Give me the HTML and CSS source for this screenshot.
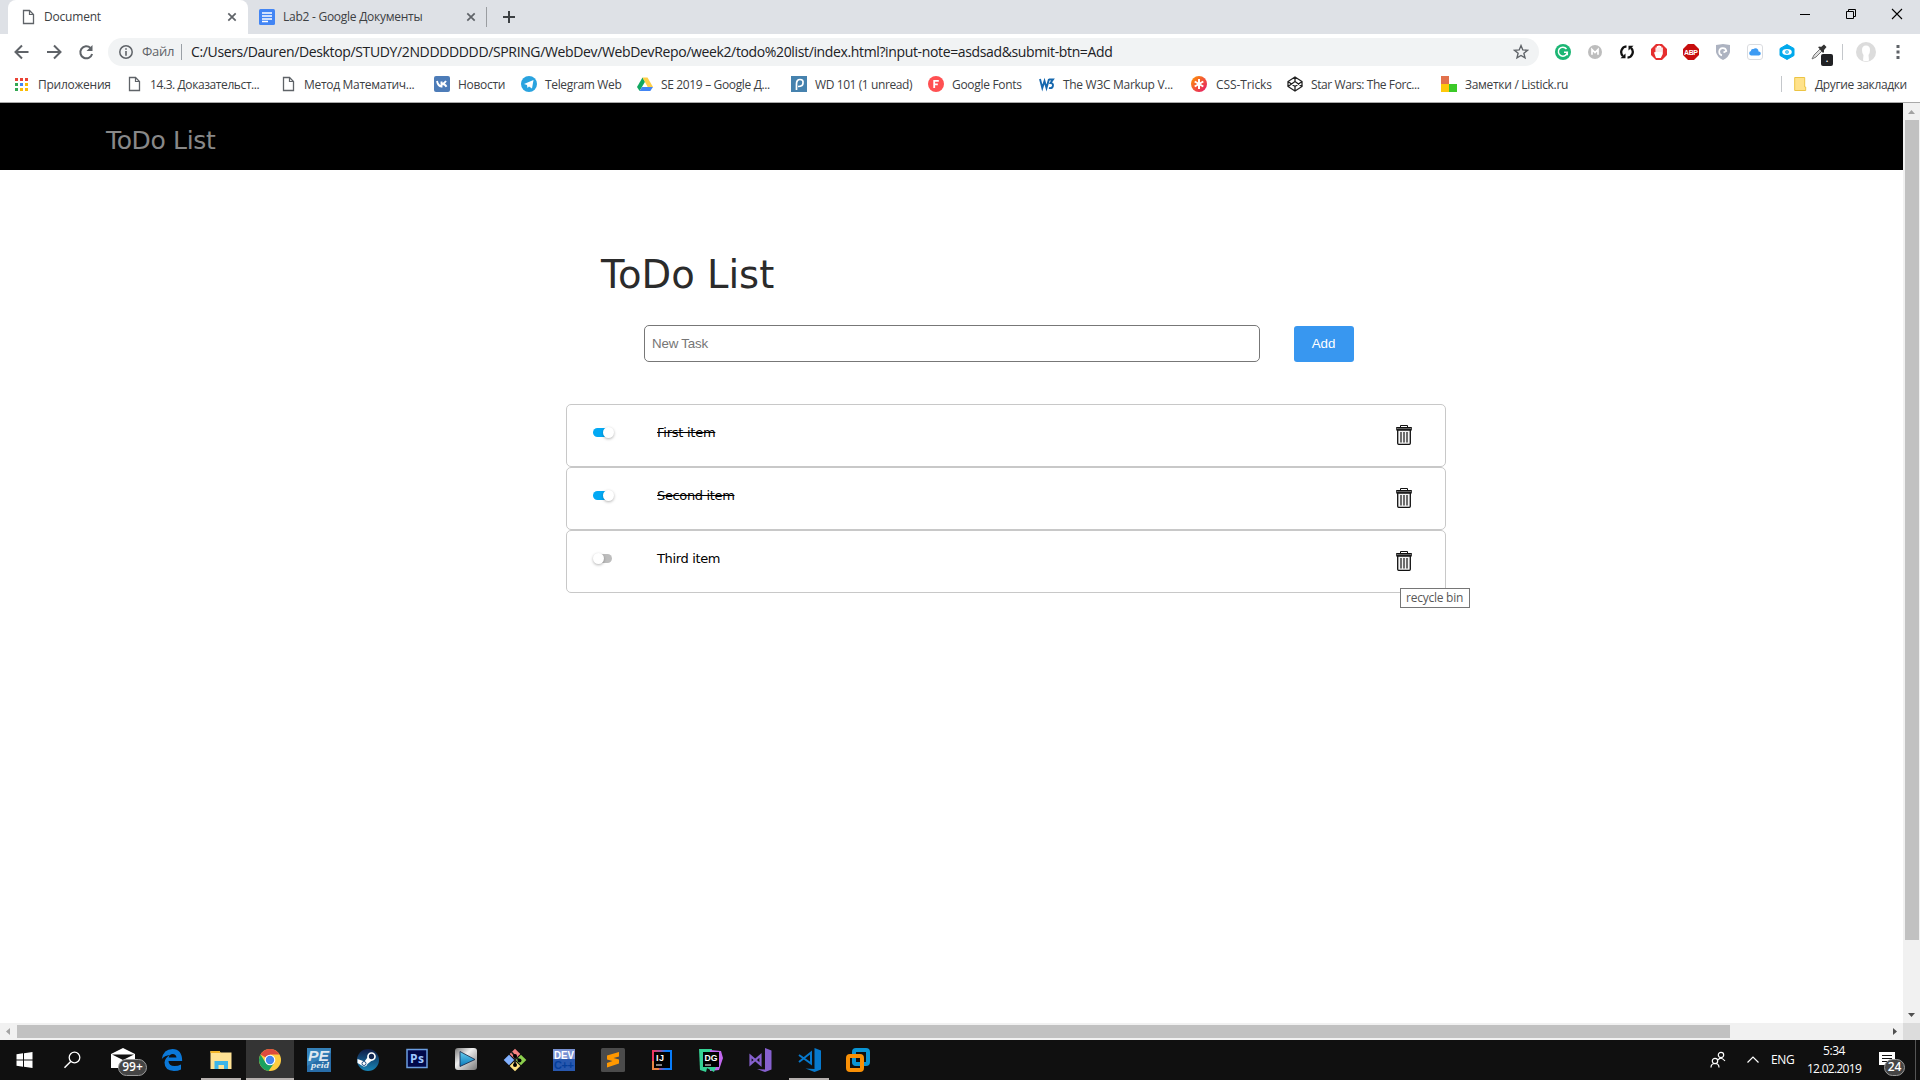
FILE: index.html
```html
<!DOCTYPE html>
<html lang="ru">
<head>
<meta charset="utf-8">
<title>Document</title>
<link rel="stylesheet" href="styles.css">
</head>
<body>
<svg class="defs" width="0" height="0">
  <symbol id="doc" viewBox="0 0 16 16"><path d="M3.500 1.500h6l4 4v9h-10z" fill="#fff" stroke="#5f6368" stroke-width="1.300"/><path d="M9.500 1.500v4h4" fill="none" stroke="#5f6368" stroke-width="1.200"/></symbol>
  <symbol id="close" viewBox="0 0 10 10"><path d="M1.300 1.300l7.400 7.400M8.700 1.300l-7.400 7.400" stroke="#5f6368" stroke-width="1.700"/></symbol>
  <symbol id="bin" viewBox="0 0 16 20"><path d="M4.500 2.500v-2h7v2" fill="none" stroke="#111"/><path d="M.8 2.700h14.400v2.200H.8z" fill="#eee" stroke="#111" stroke-width="1.200"/><path d="M2 2.800h12" stroke="#111" stroke-width="1.400"/><path d="M1.700 5h12.600v13.300q0 1-1 1H2.700q-1 0-1-1z" fill="#f4f4f4" stroke="#111" stroke-width="1.300"/><path d="M5 7v10.500M8 7v10.500M11 7v10.500" stroke="#555" stroke-width="1.700"/></symbol>
</svg>

<header class="browser">
  <div class="tabs">
    <div class="tab active">
      <svg width="16" height="16"><use href="#doc"/></svg>
      <span class="tab-name t-doc">Document</span>
      <svg width="10" height="10"><use href="#close"/></svg>
    </div>
    <div class="tab idle">
      <svg width="16" height="16" viewBox="0 0 16 16"><rect width="16" height="16" rx="1.500" fill="#4285f4"/><path d="M3 4h10M3 7h10M3 10h10M3 12.600h6" stroke="#fff" stroke-width="1.500"/></svg>
      <span class="tab-name t-lab">Lab2 - Google Документы</span>
      <svg width="10" height="10"><use href="#close"/></svg>
    </div>
    <svg class="plus" width="12" height="12" viewBox="0 0 12 12"><path d="M6 0v12M0 6h12" stroke="#3c4043" stroke-width="2"/></svg>
    <div class="window-controls">
      <svg width="46" height="28" viewBox="0 0 46 28"><path d="M18 14.500h10" stroke="#000"/></svg>
      <svg width="46" height="28" viewBox="0 0 46 28"><path d="M18.500 11.500h7v7h-7zM20.500 11v-1.500h7v7H26" fill="none" stroke="#000"/></svg>
      <svg width="46" height="28" viewBox="0 0 46 28"><path d="M18 9l10 10M28 9L18 19" stroke="#000" stroke-width="1.100"/></svg>
    </div>
  </div>

  <div class="toolbar">
    <div class="nav">
      <svg width="32" height="28" viewBox="0 0 32 28"><path d="M16 7.500L9.500 14l6.500 6.500M9.500 14H22.500" fill="none" stroke="#5f6368" stroke-width="2"/></svg>
      <svg width="32" height="28" viewBox="0 0 32 28"><path d="M16 7.500l6.500 6.500-6.500 6.500M22.500 14H9" fill="none" stroke="#5f6368" stroke-width="2"/></svg>
      <svg width="32" height="28" viewBox="0 0 32 28"><path d="M20.500 10a6 6 0 1 0 1.600 6" fill="none" stroke="#5f6368" stroke-width="2"/><path d="M22.500 7v6h-6z" fill="#5f6368"/></svg>
    </div>
    <div class="omnibox">
      <svg width="14" height="14" viewBox="0 0 14 14"><circle cx="7" cy="7" r="6.200" fill="none" stroke="#5f6368" stroke-width="1.500"/><path d="M7 3.200v1.600M7 6v4.700" stroke="#5f6368" stroke-width="1.600"/></svg>
      <span class="scheme">Файл</span>
      <span class="url">C:/Users/Dauren/Desktop/STUDY/2NDDDDDDD/SPRING/WebDev/WebDevRepo/week2/todo%20list/index.html?input-note=asdsad&amp;submit-btn=Add</span>
      <svg class="star" width="16" height="16" viewBox="0 0 16 16"><path d="M8 1.600l1.800 4.300 4.700.4-3.600 3 1.100 4.600L8 11.500l-4 2.400 1.100-4.600-3.600-3 4.700-.4z" fill="none" stroke="#5f6368" stroke-width="1.400"/></svg>
    </div>
    <div class="extensions">
      <svg viewBox="0 0 16 16"><circle cx="8" cy="8" r="8" fill="#1cb674"/><path d="M11.500 5a4.500 4.500 0 1 0 .8 3.300H9M12.300 8.300v3" fill="none" stroke="#fff" stroke-width="1.500"/></svg>
      <svg viewBox="0 0 16 16"><circle cx="8" cy="8" r="7" fill="#bdbdbd"/><path d="M5 10.800V5.500l3 3 3-3v5.300" fill="none" stroke="#fff" stroke-width="1.700"/></svg>
      <svg viewBox="0 0 16 16"><path d="M7.500 2.300A5.700 5.700 0 0 0 4 12.100M8.500 13.700A5.700 5.700 0 0 0 12 3.900" fill="none" stroke="#111" stroke-width="2.300"/><path d="M1.500 14.200h5V9.500zM14.500 1.800h-5v4.700z" fill="#111"/></svg>
      <svg viewBox="0 0 16 16"><path d="M5 0h6l5 5v6l-5 5H5l-5-5V5z" fill="#e62e2e"/><path d="M5 14L3 8.500l1.500-.5V3.500h1.300V2h1.500V1.500h1.500V2h1.500v1.500h1.500V10l-2 4z" fill="#fff"/><path d="M6 4v4M8 3v5M10 4v4" stroke="#e9a2a2" stroke-width=".5"/></svg>
      <svg viewBox="0 0 16 16"><path d="M5 0h6l5 5v6l-5 5H5l-5-5V5z" fill="#c70d0d"/><text x="8" y="10.700" class="abp" textLength="14" text-anchor="middle">ABP</text></svg>
      <svg viewBox="0 0 16 16"><path d="M1 1l7-1 7 1v7q-1 5-7 8-6-3-7-8z" fill="#adb3c1"/><path d="M7 11.300a3.600 3.600 0 1 1 4.300-4.300L8.500 8.500" fill="none" stroke="#fff" stroke-width="1.700"/></svg>
      <svg viewBox="0 0 16 16"><rect x=".5" y=".5" width="15" height="15" rx="2.500" fill="#fff" stroke="#dadce0"/><path d="M4 11.500a2.300 2.300 0 0 1 0-4.500 2 2 0 0 1 2.500-2 3 3 0 0 1 5 2.500 2 2 0 0 1 .5 4z" fill="#3d9bf3"/></svg>
      <svg viewBox="0 0 16 16"><path d="M8 .5l7 4v7l-7 4-7-4v-7z" fill="#00a9ec" stroke="#00a9ec" stroke-linejoin="round"/><ellipse cx="8" cy="8" rx="4.800" ry="3" fill="#fff"/><circle cx="8" cy="8" r="1.800" fill="#00a9ec"/><circle cx="8" cy="8" r=".7" fill="#fff"/></svg>
      <span class="picker"><svg viewBox="0 0 16 16"><path d="M1 15l2-4 6-6 2 2-6 6z" fill="#ddd" stroke="#777"/><path d="M7 3l2-.5 1 .5L13 .5 15.500 3 13 6v2l-1 1z" fill="#333"/></svg><b>.</b></span>
    </div>
    <i class="bar-sep"></i>
    <svg class="avatar" width="20" height="20" viewBox="0 0 20 20"><circle cx="10" cy="10" r="10" fill="#dcdcdc"/><path d="M6 8q0-4.500 4-4.500T14 8q0 3.500-1.500 5l.5 5.500q-3 1.500-6 0l.5-5.500Q6 11.500 6 8z" fill="#fff"/></svg>
    <svg class="menu" width="4" height="14" viewBox="0 0 4 14"><path d="M.5 0h3v3h-3zM.5 5.500h3v3h-3zM.5 11h3v3h-3z" fill="#5f6368"/></svg>
  </div>

  <nav class="bookmarks">
    <a><svg viewBox="0 0 16 16"><path d="M1 2h3v3H1zM6 2h3v3H6zM11 2h3v3h-3z" fill="#ea4335"/><path d="M1 7h3v3H1zM1 12h3v3H1z" fill="#34a853"/><path d="M6 7h3v3H6z" fill="#4285f4"/><path d="M11 7h3v3h-3zM6 12h3v3H6zM11 12h3v3h-3z" fill="#fbbc05"/></svg><span class="m1">Приложения</span></a>
    <a><svg><use href="#doc"/></svg><span class="m2">14.3. Доказательст...</span></a>
    <a><svg><use href="#doc"/></svg><span class="m3">Метод Математич...</span></a>
    <a><svg viewBox="0 0 16 16"><rect width="16" height="16" rx="2" fill="#4d7cb8"/><path d="M3 5q1 5 4.500 5.500v-5M8 8q2.500-.5 4-3M8 8q3 0 4.500 2.800" fill="none" stroke="#fff" stroke-width="1.900"/></svg><span class="m4">Новости</span></a>
    <a><svg viewBox="0 0 16 16"><circle cx="8" cy="8" r="8" fill="#2aa3df"/><path d="M3 8l9.500-4L11 12.500l-3-2-1.500 1.500-.5-3z" fill="#fff"/></svg><span class="m5">Telegram Web</span></a>
    <a><svg viewBox="0 0 16 16"><path d="M5.500 1.500L0 11l2.600 4L8 5.700z" fill="#11a861"/><path d="M5.500 1.500h5L16 11h-5.300z" fill="#ffcf48"/><path d="M5 11h11l-2.700 4H2.600z" fill="#4285f4"/></svg><span class="m6">SE 2019 – Google Д...</span></a>
    <a><svg viewBox="0 0 16 16"><path d="M0 0h16v16H0z" fill="#4682ae"/><path d="M5.500 14V8q0-4.500 3.500-4.500T12 7q0 3.500-5 3.500" fill="none" stroke="#fff" stroke-width="1.700"/></svg><span class="m7">WD 101 (1 unread)</span></a>
    <a><svg viewBox="0 0 16 16"><circle cx="8" cy="8" r="8" fill="#ff5052"/><path d="M6.200 12V4.800h4.600M6.200 8.300h3.600" fill="none" stroke="#fff" stroke-width="1.800"/></svg><span class="m8">Google Fonts</span></a>
    <a><svg viewBox="0 0 16 16"><path d="M1 3l2.300 9L5.500 5l2 7 2.500-9M10 3.500h4L11.500 7q3 .3 2.400 3T10 12" fill="none" stroke="#1768ae" stroke-width="1.900"/></svg><span class="m9">The W3C Markup V...</span></a>
    <a><svg viewBox="0 0 16 16"><defs><linearGradient id="ct" x2="1" y2="1"><stop stop-color="#ff9800"/><stop offset="1" stop-color="#e4136e"/></linearGradient></defs><circle cx="8" cy="8" r="8" fill="url(#ct)"/><path d="M8 3v10M3.700 5.500l8.600 5M3.700 10.500l8.600-5" stroke="#fff" stroke-width="2"/></svg><span class="m10">CSS-Tricks</span></a>
    <a><svg viewBox="0 0 16 16"><path d="M8 1l7 4.500v5L8 15l-7-4.500v-5zM1 5.500l7 5 7-5M1 10.500l7-5 7 5M8 1v4.500M8 10.500V15" fill="none" stroke="#222" stroke-width="1.300"/></svg><span class="m11">Star Wars: The Forc...</span></a>
    <a><svg viewBox="0 0 16 16"><path d="M0 0h8v8H0z" fill="#e2714c"/><path d="M0 8h8v8H0z" fill="#fec80a"/><path d="M8 8h8v8H8z" fill="#3bc928"/></svg><span class="m12">Заметки / Listick.ru</span></a>
    <a class="other"><svg viewBox="0 0 16 16"><path d="M.7 1.500h10v9.500h1v3.500h-11z" fill="#ffe28a" stroke="#ecc444"/></svg><span class="m13">Другие закладки</span></a>
  </nav>
</header>

<main class="viewport">
  <div class="page">
    <div class="site-head"><span>ToDo List</span></div>
    <section class="todo">
      <h1><span>ToDo List</span></h1>
      <form><input type="text" placeholder="New Task"><button type="button">Add</button></form>
      <ul>
        <li><i class="switch on"></i><s class="i1">First item</s><svg class="bin" width="16" height="20"><use href="#bin"/></svg></li>
        <li><i class="switch on"></i><s class="i2">Second item</s><svg class="bin" width="16" height="20"><use href="#bin"/></svg></li>
        <li><i class="switch"></i><span class="i3">Third item</span><svg class="bin" width="16" height="20"><use href="#bin"/></svg><em class="tip"><span>recycle bin</span></em></li>
      </ul>
    </section>
  </div>
  <div class="vscroll"><svg width="17" height="17"><path d="M5 11h7L8.500 7z" fill="#a3a3a3"/></svg><i></i><svg width="17" height="17"><path d="M5 7h7l-3.500 4z" fill="#505050"/></svg></div>
  <div class="hscroll"><svg width="17" height="17"><path d="M10 5v7L6 8.500z" fill="#a3a3a3"/></svg><i></i><svg width="17" height="17"><path d="M7 5v7l4-3.500z" fill="#505050"/></svg></div>
  <div class="corner"></div>
</main>

<footer class="taskbar">
  <div class="apps">
    <a><svg viewBox="0 0 24 24"><path d="M3.500 6.300l6.500-1v6.200H3.500zM11 5.200L19.500 4v7.500H11zM3.500 12.500H10v6.200l-6.500-.9zM11 12.500h8.500V20L11 18.800z" fill="#fff"/></svg></a>
    <a><svg viewBox="0 0 24 24"><circle cx="12.500" cy="9.500" r="5.300" fill="none" stroke="#fff" stroke-width="1.300"/><path d="M8.700 13.400L2.500 19.800" stroke="#fff" stroke-width="1.500"/></svg></a>
    <a class="mail"><svg viewBox="0 0 24 24"><path d="M0 6l12-6 12 6v14H0z" fill="#fff" transform="translate(0 2)"/><path d="M1 8.500h22L12 14z" fill="#111"/></svg><b>99+</b></a>
    <a><svg viewBox="0 0 24 24"><path d="M1.800 11Q3.500 1 12.500 1 22 1 22.200 13H8.500q.2 5 6 5 3.700 0 6.500-1.600v5Q18 23 14 23 4.500 22.500 4.500 14.500 5 9.500 10 7q-5.500.5-8.200 4zM8.700 9.500h7.800Q16 6 12.700 6T8.700 9.500z" fill="#0b78d7"/></svg></a>
    <a class="open"><svg viewBox="0 0 24 24"><path d="M1.500 3h9l1 1.500h11V21h-21z" fill="#ffe294"/><path d="M1.500 3h9l1 2h-10z" fill="#f3b529"/><path d="M5.500 21v-8H19v8h-4v-4h-5.500v4z" fill="#3db5e8"/></svg></a>
    <a class="open current"><svg viewBox="0 0 24 24"><circle cx="12" cy="12" r="11" fill="#ffcd40"/><path d="M12 12L2.500 6.500A11 11 0 0 1 21.500 6.500H12z" fill="#dd4b3e"/><path d="M2.500 6.500A11 11 0 0 0 10.500 22.900L16.500 14.500 12 12 7.500 14.500z" fill="#1aa15f"/><circle cx="12" cy="12" r="5.300" fill="#fff"/><circle cx="12" cy="12" r="4.200" fill="#4585ef"/></svg></a>
    <a><svg viewBox="0 0 24 24"><path d="M0 0h24v24H0z" fill="#286da8"/><path d="M0 0h24v5L0 18z" fill="#4295c9" opacity=".5"/><text class="pe" x="1" y="13" textLength="21" lengthAdjust="spacingAndGlyphs">PE</text><text class="peid" x="4" y="20" textLength="18" lengthAdjust="spacingAndGlyphs">peid</text></svg></a>
    <a><svg viewBox="0 0 24 24"><defs><linearGradient id="st" x2="0" y2="1"><stop stop-color="#111b45"/><stop offset="1" stop-color="#1685b7"/></linearGradient></defs><circle cx="12" cy="12" r="11" fill="url(#st)"/><path d="M1.500 11l7 2.500 4-5.500 4 4-5 4q-1 3-4 2.500L1.500 15z" fill="#fff"/><circle cx="15.500" cy="8.500" r="3.500" fill="#152951" stroke="#fff" stroke-width="1.700"/><circle cx="8" cy="15.500" r="2" fill="none" stroke="#24558b"/></svg></a>
    <a><svg viewBox="0 0 24 24"><path d="M2 1.500h20v18H2z" fill="#00084a" stroke="#6b9de0" stroke-width="1.500"/><text class="ps" x="5" y="15" textLength="14">Ps</text></svg></a>
    <a><svg viewBox="0 0 24 24"><defs><linearGradient id="kp" x2="1" y2="1"><stop stop-color="#777"/><stop offset=".4" stop-color="#eee"/><stop offset="1" stop-color="#777"/></linearGradient><linearGradient id="kb" x2="0" y2="1"><stop stop-color="#67cced"/><stop offset="1" stop-color="#087abc"/></linearGradient></defs><rect x="1" width="22" height="22" rx="3" fill="url(#kp)"/><path d="M6 3.500v15L21 11.500z" fill="url(#kb)" stroke="#124" stroke-width=".8"/></svg></a>
    <a><svg viewBox="0 0 24 24"><g transform="rotate(45 12 12)"><path d="M4 4h7.500v7.500H4z" fill="#f58282"/><path d="M12.500 4H20v7.500h-7.500z" fill="#8ccf4d"/><path d="M4 12.500h7.500V20H4z" fill="#82b1ff"/><path d="M12.500 12.500H20V20h-7.500z" fill="#ffe282"/></g><path d="M8.500 4l3.500 4v9M12 8l5 5" stroke="#222" stroke-width="1.800" fill="none"/><circle cx="12" cy="8" r="2"/><circle cx="12" cy="17" r="2"/><circle cx="16.500" cy="12.500" r="2"/></svg></a>
    <a><svg viewBox="0 0 24 24"><path d="M1 1h22v22H1z" fill="#2858af"/><path d="M1 1h22v10H1z" fill="#7891d2"/><text class="dev" x="2" y="10.500" textLength="20" lengthAdjust="spacingAndGlyphs">DEV</text><text class="cpp" x="2" y="21" textLength="20">C++</text></svg></a>
    <a><svg viewBox="0 0 24 24"><rect width="24" height="24" rx="1.500" fill="#4b4b4b"/><path d="M18 4v4.500L12.500 10 18 11.500v4L6 19.500V15l5.500-2L6 11.500v-4z" fill="#ff9800"/></svg></a>
    <a><svg viewBox="0 0 24 24"><defs><linearGradient id="ij" x2="1"><stop stop-color="#fc3157"/><stop offset=".4" stop-color="#9b559f"/><stop offset=".7" stop-color="#087cfa"/></linearGradient></defs><path d="M2 2h20v20H2z" fill="url(#ij)"/><path d="M2 13h7v9H2z" fill="#ec8643"/><path d="M4 4h16v16H4z"/><text class="jb" x="6" y="13" textLength="8">IJ</text><path d="M6 17h6" stroke="#fff"/></svg></a>
    <a><svg viewBox="0 0 24 24"><path d="M0 1h13L7 24l-6-2z" fill="#35d194"/><path d="M11 2l11 1 2 7-4 12-9 1z" fill="#c267ef"/><path d="M6 19h11l-2 5z" fill="#35d194"/><path d="M4 4h16v15H4z"/><text class="jb" x="5.500" y="13" textLength="13" lengthAdjust="spacingAndGlyphs">DG</text><path d="M6 17h6" stroke="#fff"/></svg></a>
    <a><svg viewBox="0 0 24 24"><path d="M17 0l6.500 2.500v19L17 24l-8-3 8 .5z" fill="#8660ce"/><path d="M2.500 8v8l10-8.500v9z" fill="none" stroke="#8660ce" stroke-width="2.200"/></svg></a>
    <a class="open"><svg viewBox="0 0 24 24"><path d="M17.500 0L24 2.500v19L17.500 24l-9-3.500 9 .5z" fill="#0779cd"/><path d="M2 7l12 8.500V4.500L2 14" fill="none" stroke="#0779cd" stroke-width="2"/></svg></a>
    <a><svg viewBox="0 0 24 24"><rect x="8" y="2" width="14" height="14" rx="2" fill="none" stroke="#0a95d5" stroke-width="4"/><rect x="2" y="8" width="14" height="14" rx="2" fill="none" stroke="#f99006" stroke-width="4"/><path d="M8 11v3q0 2 2 2h3" fill="none" stroke="#0a95d5" stroke-width="3"/></svg></a>
  </div>
  <div class="tray">
    <svg class="people" width="16" height="18" viewBox="0 0 16 18"><circle cx="5" cy="10" r="2.700" fill="none" stroke="#fff" stroke-width="1.200"/><path d="M1 16.500q0-4 4-4t4 4" fill="none" stroke="#fff" stroke-width="1.200"/><circle cx="11" cy="4" r="2.700" fill="none" stroke="#fff" stroke-width="1.200"/><path d="M8 9q3-4 7 1" fill="none" stroke="#fff" stroke-width="1.200"/></svg>
    <svg class="chev" width="12" height="8" viewBox="0 0 12 8"><path d="M.5 6.500L6 1l5.500 5.500" fill="none" stroke="#fff" stroke-width="1.200"/></svg>
    <span class="lang">ENG</span>
    <div class="clock"><span class="time">5:34</span><span class="date">12.02.2019</span></div>
    <div class="notes"><svg width="16" height="16" viewBox="0 0 16 16"><path d="M0 0h16v13h-6l-3 3v-3H0z" fill="#fff"/><path d="M3 3.500h10M3 6.500h10M3 9.500h7" stroke="#111"/></svg><b>24</b></div>
    <i class="peek"></i>
  </div>
</footer>
</body>
</html>
```
FILE: styles.css
```css
* { box-sizing: border-box; }
body { margin: 0; width: 1920px; height: 1080px; overflow: hidden; display: flex; flex-direction: column; background: #fff; font-family: "Open Sans", "Noto Sans", sans-serif; font-size: 12px; color: #3c4043; }
svg { display: block; flex: none; }
span, s { white-space: nowrap; }
.defs { position: absolute; }

.browser { height: 103px; border-bottom: 1px solid #a9a9a9; }
.tabs { height: 34px; background: #dee1e6; display: flex; align-items: flex-start; padding-left: 8px; }
.tab { display: flex; align-items: center; height: 34px; }
.tab-name { flex: 1; line-height: 16px; }
.t-doc { letter-spacing: -.2px; }
.t-lab { letter-spacing: -.26px; }
.active { width: 240px; background: #fff; border-radius: 8px 8px 0 0; padding: 0 11px 0 12px; gap: 8px; }
.idle { width: 239px; height: 20px; margin-top: 7px; padding: 0 10px 0 11px; gap: 8px; border-right: 1px solid #9a9da1; }
.plus { margin: 11px 0 0 16px; }
.window-controls { display: flex; margin-left: auto; }

.toolbar { height: 36px; display: flex; align-items: center; }
.nav { display: flex; padding-left: 6px; width: 108px; }
.omnibox { width: 1431px; height: 28px; border-radius: 14px; background: #f1f3f4; display: flex; align-items: center; padding: 0 10px 0 11px; }
.scheme { margin-left: 9px; width: 40px; height: 16px; line-height: 14px; font-size: 13px; letter-spacing: -.3px; color: #5f6368; border-right: 1px solid #9aa0a6; }
.url { margin-left: 9px; font-size: 14px; line-height: 18px; letter-spacing: -.36px; color: #202124; }
.star { margin-left: auto; }
.extensions { display: flex; gap: 16px; margin-left: 16px; }
.extensions svg { width: 16px; height: 16px; }
.abp { font: bold 7px "Liberation Sans", sans-serif; fill: #fff; }
.picker { position: relative; }
.picker b { position: absolute; left: 10px; top: 10px; width: 12px; height: 12px; border-radius: 2px; background: #202124; color: #fff; font-size: 9px; line-height: 9px; text-align: center; }
.bar-sep { width: 1px; height: 16px; background: #c4c7cb; margin-left: 15px; }
.avatar { margin-left: 13px; }
.menu { margin-left: 20px; }

.bookmarks { display: grid; grid-template-columns: 112px 154px 154px 87px 116px 154px 137px 111px 152px 96px 154px 340px 1fr; padding: 6px 0 0 14px; height: 32px; }
.bookmarks a { display: flex; height: 16px; align-items: center; gap: 8px; letter-spacing: -.3px; }
.bookmarks svg { width: 16px; height: 16px; }
.bookmarks .m1 { letter-spacing: -.25px; }
.bookmarks .m2, .bookmarks .m7, .bookmarks .m11 { letter-spacing: -.41px; }
.bookmarks .m5, .bookmarks .m6, .bookmarks .m13 { letter-spacing: -.35px; }
.bookmarks .m10 { letter-spacing: -.1px; margin-left: 1px; }
.bookmarks .other { border-left: 1px solid #c4c7cb; padding-left: 12px; gap: 5px; }

.viewport { flex: 1; min-height: 0; display: grid; grid-template-columns: 1903px 17px; grid-template-rows: 920px 17px; }
.page { background: #fff; overflow: hidden; }
.site-head { height: 67px; background: #000; padding: 21px 0 0 106px; font: 25px/33px "DejaVu Sans", sans-serif; letter-spacing: -.35px; color: #888; }
.todo { width: 880px; margin-left: 566px; padding-top: 81px; }
.todo h1 { margin: 0; padding: 1px 0 0 35px; height: 46px; font: 38.5px/46px "DejaVu Sans", sans-serif; color: #2b2b2b; }
.todo form { display: flex; align-items: flex-end; gap: 34px; padding: 28px 0 0 78px; margin: 0; }
.todo input { width: 616px; height: 37px; border: 1px solid #777; border-radius: 5px; padding: 0 7px; font: 13.33px "Liberation Sans", sans-serif; letter-spacing: -.2px; background: #fff; }
.todo input::placeholder { color: #757575; }
.todo button { width: 60px; height: 36px; border: 0; border-radius: 3px; background: #3897f0; color: #fff; font: 13.33px "Liberation Sans", sans-serif; padding: 0 1px 2px 0; }
.todo ul { list-style: none; margin: 42px 0 0; padding: 0; }
.todo li { position: relative; height: 63px; border: 1px solid #c8c8c8; border-radius: 5px; padding: 20px 33px 0 26px; display: flex; align-items: flex-start; color: #000; font: 13px/16px "DejaVu Sans", sans-serif; letter-spacing: -.35px; }
.todo li > span, .todo li > s { margin-left: 44px; }
.todo li > .i1 { letter-spacing: -.25px; }
.bin { margin-left: auto; }
.switch { position: relative; width: 20px; height: 9px; margin-top: 3px; }
.switch::before { content: ""; position: absolute; left: 2px; top: 0; width: 17px; height: 9px; border-radius: 5px; background: #bdbdbd; }
.switch::after { content: ""; position: absolute; left: 0; top: -1px; width: 11px; height: 11px; border-radius: 50%; background: #fff; box-shadow: 0 1px 3px rgba(0,0,0,.3); }
.switch.on::before { left: 0; background: #03a9f4; }
.switch.on::after { left: 9.5px; }
.tip { position: absolute; left: 833px; top: 57px; width: 70px; height: 20px; border: 1px solid #767676; background: #fff; padding-left: 5px; color: #575757; font: 12px/18px "Open Sans", sans-serif; letter-spacing: -.25px; z-index: 1; }
.vscroll { background: #f1f1f1; display: flex; flex-direction: column; }
.vscroll i { height: 820px; margin: 0 1px 66px 2px; background: #c1c1c1; }
.hscroll { background: #f1f1f1; display: flex; }
.hscroll i { width: 1713px; margin: 2px 156px 2px 0; background: #c1c1c1; }
.corner { background: #dcdcdc; }

.taskbar { height: 40px; background: #101010; display: flex; justify-content: space-between; color: #fff; }
.apps { display: flex; }
.apps a { width: 49px; display: flex; justify-content: center; align-items: center; position: relative; }
.apps svg { width: 24px; height: 24px; }
.apps .open::after { content: ""; position: absolute; left: 5px; right: 4px; bottom: 0; height: 2px; background: #b5b0ae; }
.apps .current { background: linear-gradient(#343434, #343434) 1px 0 / 48px 40px no-repeat; }
.apps .current::after { left: 1px; right: 0; }
.mail b, .notes b { position: absolute; border: 1px solid #999; border-radius: 9px; background: #454545; font-weight: 600; text-align: center; }
.mail svg { margin-top: -4px; }
.mail b { left: 20px; top: 19px; width: 29px; height: 17px; font-size: 12px; line-height: 14px; }
.pe { font: italic bold 15px "Liberation Sans", sans-serif; fill: #dfe9f1; }
.peid { font: italic bold 9px "Liberation Serif", serif; fill: #dfe9f1; }
.ps { font: bold 12px "Open Sans", sans-serif; fill: #9fc8ff; }
.dev { font: bold 11px "Liberation Sans", sans-serif; fill: #fff; }
.cpp { font: bold 11px "Liberation Sans", sans-serif; fill: #053e9a; }
.jb { font: bold 9px "Liberation Sans", sans-serif; fill: #fff; }
.tray { display: flex; align-items: center; position: relative; }
.people { margin-right: 21px; }
.chev { margin-right: 12px; }
.lang { width: 23px; margin-right: 13px; line-height: 16px; letter-spacing: -.3px; }
.clock { width: 54px; display: flex; flex-direction: column; align-items: center; line-height: 18px; margin-right: 18px; }
.clock .time { letter-spacing: -.4px; }
.clock .date { letter-spacing: -.7px; }
.notes { position: relative; height: 16px; margin-right: 20px; }
.notes b { left: 5px; top: 7px; width: 21px; height: 17px; font-size: 12px; line-height: 14px; }
.peek { width: 1px; height: 40px; background: #555; margin-right: 4px; }
```
